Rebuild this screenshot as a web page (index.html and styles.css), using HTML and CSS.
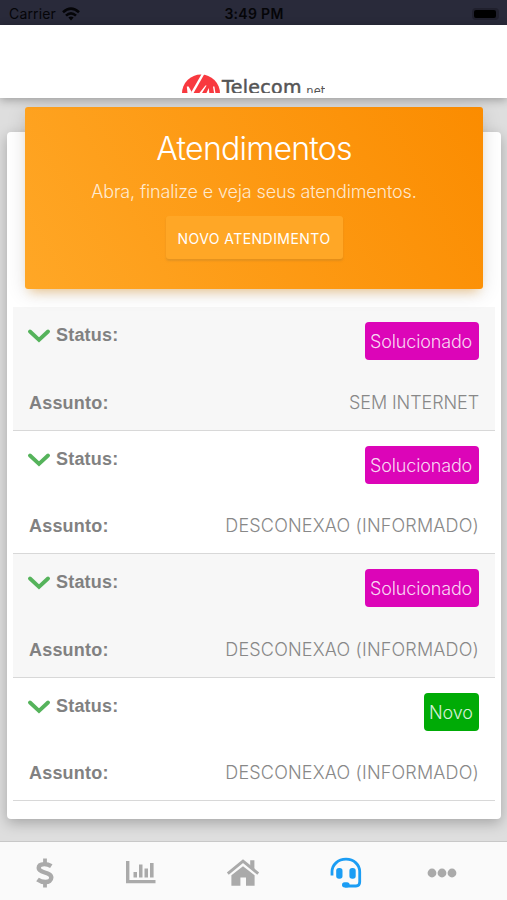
FILE: index.html
```
<!DOCTYPE html>
<html lang="pt-BR">
<head>
	<meta charset="utf-8"/>
	<title>Atendimentos</title>
	<meta name="viewport" content="width=device-width, initial-scale=1.0"/>
	<link rel="stylesheet" href="styles.css">
</head>
<body>
	<div class="statusbar">
		<div class="carrier">
			<span>Carrier</span>
			<svg width="18" height="14" viewBox="0 0 18 14" fill="none" stroke="#050508" stroke-width="2.6">
				<path d="M1 5.2Q9-2 17 5.2"/>
				<path d="M4 8.6Q9 4 14 8.6"/>
				<path d="M6.4 10.4Q9 8.4 11.6 10.4L9 13.4Z" fill="#050508" stroke="none"/>
			</svg>
		</div>
		<span class="clock">3:49 PM</span>
		<div class="battery"><i></i></div>
	</div>

	<header class="topbar">
		<div class="logo">
			<svg width="38" height="38" viewBox="0 0 38 38">
				<circle cx="19" cy="19.5" r="19" fill="#f8393f"/>
				<path d="M4.8 12.5H6.6L9.4 17.5L8.4 20H5.6Z" fill="#fff"/>
				<path d="M21.6-1L9.6 20" stroke="#fff" stroke-width="2.4"/>
				<path d="M16.6 20L23.4 11.5H24.6L19.4 20ZM24 20L26.8 14L27.4 20ZM31 12.5H32.4L33.6 20H32.2Z" fill="#fff"/>
			</svg>
			<span class="name">Telecom</span><span class="net">.net</span>
		</div>
	</header>

	<main class="content">
		<div class="card">
			<div class="card-header">
				<h1>Atendimentos</h1>
				<p>Abra, finalize e veja seus atendimentos.</p>
				<a href="#" class="btn">NOVO ATENDIMENTO</a>
			</div>
			<ul class="list">
				<li>
					<div class="line">
						<svg class="arrow" viewBox="0 0 22 14"><path d="M2 2.5L11 11L20 2.5"/></svg>
						<b class="status">Status:</b>
						<span class="badge solved">Solucionado</span>
					</div>
					<div class="line">
						<b class="subject">Assunto:</b>
						<span class="value sem">SEM INTERNET</span>
					</div>
				</li>
				<li>
					<div class="line">
						<svg class="arrow" viewBox="0 0 22 14"><path d="M2 2.5L11 11L20 2.5"/></svg>
						<b class="status">Status:</b>
						<span class="badge solved">Solucionado</span>
					</div>
					<div class="line">
						<b class="subject">Assunto:</b>
						<span class="value">DESCONEXAO (INFORMADO)</span>
					</div>
				</li>
				<li>
					<div class="line">
						<svg class="arrow" viewBox="0 0 22 14"><path d="M2 2.5L11 11L20 2.5"/></svg>
						<b class="status">Status:</b>
						<span class="badge solved">Solucionado</span>
					</div>
					<div class="line">
						<b class="subject">Assunto:</b>
						<span class="value">DESCONEXAO (INFORMADO)</span>
					</div>
				</li>
				<li>
					<div class="line">
						<svg class="arrow" viewBox="0 0 22 14"><path d="M2 2.5L11 11L20 2.5"/></svg>
						<b class="status">Status:</b>
						<span class="badge new">Novo</span>
					</div>
					<div class="line">
						<b class="subject">Assunto:</b>
						<span class="value">DESCONEXAO (INFORMADO)</span>
					</div>
				</li>
			</ul>
		</div>
	</main>

	<nav class="tabbar">
		<a href="#" title="Financeiro">
			<svg width="20" height="32" viewBox="0 0 20 32" fill="none" stroke="#aaa" stroke-width="4.4">
				<path d="M16.3 9.2C13.8 7.6 11.5 7.1 9.3 7.1C5.4 7.1 3.7 8.9 3.7 11C3.7 16.4 16.3 14.6 16.3 20.6C16.3 23.5 13.8 25 10.5 25C7.5 25 5 24.3 2.5 22.4"/>
				<path d="M10 1.5V7M10 25V30.5" stroke-width="3.8"/>
			</svg>
		</a>
		<a href="#" title="Consumo">
			<svg width="32" height="26" viewBox="0 0 32 26" fill="#aaa">
				<path d="M1 1H4.4V20H30.5V23.2H1ZM8.5 12H12V17.5H8.5ZM14 4.5H17.5V17.5H14ZM19.5 8.5H23V17.5H19.5ZM25 3H28.6V17.5H25Z"/>
			</svg>
		</a>
		<a href="#" title="Início">
			<svg width="34" height="28" viewBox="0 0 34 28" fill="#aaa">
				<path d="M5.4 16.3L17 7.2L28.6 16.3V26.8H20V18.4H14.4V26.8H5.4Z"/>
				<path d="M1.8 14.6L17 2.2L32.2 14.6" fill="none" stroke="#aaa" stroke-width="3"/>
				<path d="M24.2 1.3H28.4V11.2L24.2 8Z"/>
			</svg>
		</a>
		<a href="#" title="Atendimentos">
			<svg width="32" height="32" viewBox="0 0 32 32" fill="#1b9df4">
				<path d="M2 18.4V14.8C2 7.8 8 2.2 16 2.2S29.7 7.8 29.7 14.8V25C29.7 27.6 28.4 29 26 29H15" fill="none" stroke="#1b9df4" stroke-width="2.8"/>
				<rect x="6.2" y="11" width="6.3" height="10.8" rx="2.8"/>
				<rect x="19.4" y="11" width="6.3" height="10.8" rx="2.8"/>
				<rect x="12" y="25.2" width="7.6" height="5.2" rx="2.6"/>
			</svg>
		</a>
		<a href="#" title="Mais" class="more">
			<svg width="30" height="10" viewBox="0 0 30 10" fill="#aaa">
				<circle cx="5" cy="5" r="4.4"/><circle cx="15" cy="5" r="4.4"/><circle cx="25" cy="5" r="4.4"/>
			</svg>
		</a>
	</nav>
</body>
</html>
```
FILE: styles.css
```
*{ margin:0; padding:0; box-sizing:border-box;}
body{ width:507px; height:900px; display:flex; flex-direction:column; overflow:hidden; background:#dedede; font-family:Inter, "Liberation Sans", sans-serif; font-weight:300; color:#888;}
a{ text-decoration:none; color:inherit;}
li{ list-style:none;}

/* status bar */
.statusbar{ height:25px; padding:2px 8px 0 9px; display:grid; grid-template-columns:1fr auto 1fr; align-items:center; background:#292a3a; color:#050508; font-size:14px; font-weight:400; flex:none;}
	.carrier{ display:flex; align-items:center; gap:6px; letter-spacing:.15px;}
	.clock{ font-weight:600; letter-spacing:.3px;}
	.battery{ justify-self:end; width:27px; height:12px; padding:2px; border-radius:4px; background:#20202d;}
		.battery i{ display:block; width:22px; height:8px; border-radius:2px; background:#000;}

.topbar{ position:relative; z-index:1; height:73px; padding-top:49px; display:flex; justify-content:center; background:#fff; box-shadow:0 2px 9px rgba(0,0,0,.3); flex:none;}
	.logo{ width:143px; height:18.5px; overflow:hidden; display:flex; align-items:flex-start; color:#555; white-space:nowrap;}
		.logo svg{ flex:none;}
		.logo .name{ margin:2px 0 0 2px; font:400 19px/22px "DejaVu Sans", sans-serif; letter-spacing:.3px; -webkit-text-stroke:.5px #555;}
		.logo .net{ margin:9px 0 0 1px; font:400 11.5px/16px "DejaVu Sans", sans-serif;}

.content{ flex:1; padding:34px 6px 0 7px;}
	.card{ height:687px; padding:0 6px; border-radius:4px; background:#fff; box-shadow:0 4px 14px rgba(0,0,0,.26);}
	.card-header{ position:relative; top:-25px; height:182px; margin:0 12px; padding-top:23px; text-align:center; color:#fff; border-radius:3px; background:linear-gradient(60deg,#ffa726,#fb8c00); box-shadow:0 4px 20px rgba(0,0,0,.12), 0 7px 10px -5px rgba(255,152,0,.4);}
		.card-header h1{ font-size:32px; line-height:38px; font-weight:300; letter-spacing:-.75px;}
		.card-header p{ margin-top:12px; font-size:18px; line-height:24px; letter-spacing:-.15px; color:rgba(255,255,255,.8);}
		.btn{ display:block; width:177px; height:43px; margin:12px auto 0; font-size:14px; line-height:45px; font-weight:400; letter-spacing:.45px; border-radius:3px; background:#ffa726; box-shadow:0 2px 2px rgba(153,115,50,.25);}

.list{ margin-top:-7px;}
	.list li{ height:123.5px; padding:15px 16px 0 15px; border-bottom:1px solid #d8d8d8;}
	.list li:nth-child(odd){ background:#f7f7f7;}
	.line{ display:flex; align-items:flex-start; white-space:nowrap;}
	.line + .line{ padding:29.5px 0 0 1px;}
		.arrow{ width:22px; height:14px; margin:7px 6px 0 0; fill:none; stroke:#55b35b; stroke-width:3.8; stroke-linecap:round; stroke-linejoin:miter;}
		.line b{ font:bold 18px/26px "Liberation Sans", Arial, sans-serif; letter-spacing:.2px; color:#818181;}
		.badge{ margin-left:auto; height:38px; padding:0 5px; border-radius:4px; font-size:18px; line-height:39px; letter-spacing:-.15px; color:rgba(255,255,255,.85);}
		.solved{ width:114px; background:#dc05b8;}
		.new{ width:55px; background:#00ab06;}
		.value{ margin-left:auto; font-size:18px; line-height:26px; letter-spacing:.17px;}
		.sem{ letter-spacing:-.1px;}

.tabbar{ height:59px; padding:4px 46px 0 35px; display:flex; align-items:center; justify-content:space-between; background:#fafafa; border-top:1px solid #c8c8c8; flex:none; position:relative;}
	.tabbar a, .tabbar svg{ display:block;}
	.tabbar .more{ margin:0 4px 0 -4px;}
```
